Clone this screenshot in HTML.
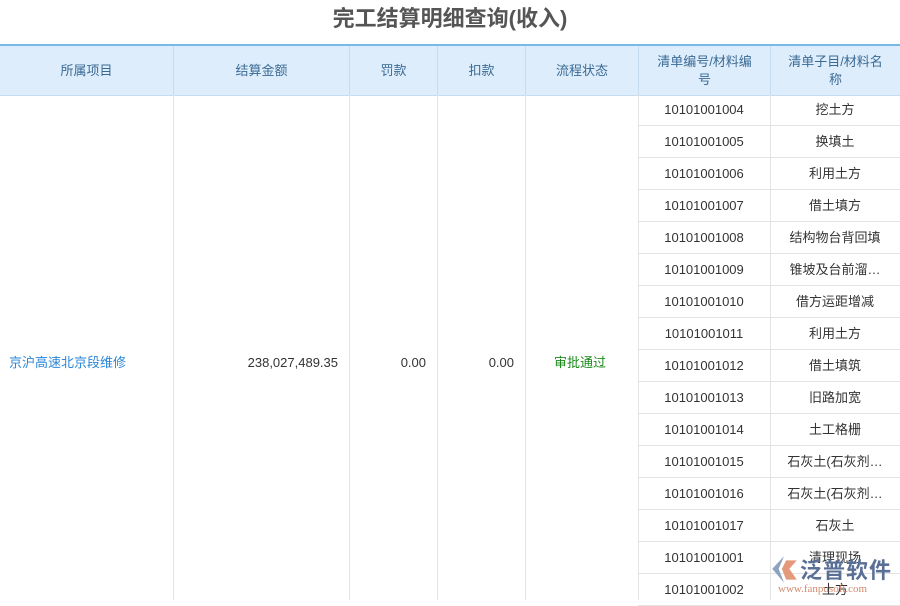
<!DOCTYPE html>
<html><head><meta charset="utf-8"><style>
body{margin:0;width:900px;height:600px;overflow:hidden;background:#fff;font-family:"Liberation Sans","Noto Sans CJK SC",sans-serif;position:relative}
.t{position:absolute;top:0;left:0;width:900px;text-align:center;font-size:22px;font-weight:bold;color:#555;line-height:38px}
.hd{position:absolute;top:44px;left:0;width:900px;height:49px;background:#deedfb;border-top:2px solid #7ab8e8;border-bottom:1px solid #c5dcf0}
.c{position:absolute;top:0;height:49px;display:flex;align-items:center;justify-content:center;text-align:center;font-size:13px;color:#3a6a94;border-right:1px solid #c5dcf0;box-sizing:border-box;line-height:18px}
.v{position:absolute;top:95px;height:505px;border-right:1px solid #e3e3e3}
.r{position:absolute;left:638px;width:262px;height:31px;border-bottom:1px solid #e3e3e3;font-size:13px;color:#333}
.r span{position:absolute;top:0;line-height:31px;text-align:center}
.m{position:absolute;top:355px;font-size:13px;line-height:16px}
</style></head><body>
<div class="t">完工结算明细查询(收入)</div>
<div class="hd">
<div class="c" style="left:0;width:174px">所属项目</div>
<div class="c" style="left:174px;width:176px">结算金额</div>
<div class="c" style="left:350px;width:88px">罚款</div>
<div class="c" style="left:438px;width:88px">扣款</div>
<div class="c" style="left:526px;width:113px">流程状态</div>
<div class="c" style="left:639px;width:132px;padding:0 12px">清单编号/材料编号</div>
<div class="c" style="left:771px;width:129px;border:0;padding:0 13px">清单子目/材料名称</div>
</div>
<div class="v" style="left:173px"></div><div class="v" style="left:349px"></div><div class="v" style="left:437px"></div><div class="v" style="left:525px"></div><div class="v" style="left:638px"></div><div class="v" style="left:770px"></div>
<div class="m" style="left:9px;color:#2a86d8">京沪高速北京段维修</div>
<div class="m" style="left:200px;width:138px;text-align:right;color:#333">238,027,489.35</div>
<div class="m" style="left:360px;width:66px;text-align:right;color:#333">0.00</div>
<div class="m" style="left:448px;width:66px;text-align:right;color:#333">0.00</div>
<div class="m" style="left:554px;color:#1a8a1a">审批通过</div>
<div id="rows"></div>
<script>
var d=[["10101001004","挖土方"],["10101001005","换填土"],["10101001006","利用土方"],["10101001007","借土填方"],["10101001008","结构物台背回填"],["10101001009","锥坡及台前溜…"],["10101001010","借方运距增减"],["10101001011","利用土方"],["10101001012","借土填筑"],["10101001013","旧路加宽"],["10101001014","土工格栅"],["10101001015","石灰土(石灰剂…"],["10101001016","石灰土(石灰剂…"],["10101001017","石灰土"],["10101001001","清理现场"],["10101001002","土方"]];
var h="";d.forEach(function(x,i){h+='<div class="r" style="top:'+(94+i*32)+'px"><span style="left:0;width:132px">'+x[0]+'</span><span style="left:132px;width:130px">'+x[1]+'</span></div>'});
document.getElementById("rows").innerHTML=h;
</script>
<div style="position:absolute;left:768px;top:552px;width:132px;height:48px;">
<svg width="32" height="32" viewBox="0 0 30 30" style="position:absolute;left:0;top:2px"><path d="M15 2 L4 14 L15 27 L10 14Z" fill="#8fa3c0"/><path d="M17 6 L27 6 L20 14 L27 24 L17 24 L13 14Z" fill="#e49a7a"/></svg>
<div style="position:absolute;left:32px;top:1px;font-size:22px;color:#5a6f95;font-weight:bold;letter-spacing:1px">泛普软件</div>
<div style="position:absolute;left:10px;top:31px;font-size:11px;color:#d28a70;font-family:'Liberation Serif',serif">www.fanpusoft.com</div>
</div>
</body></html>
